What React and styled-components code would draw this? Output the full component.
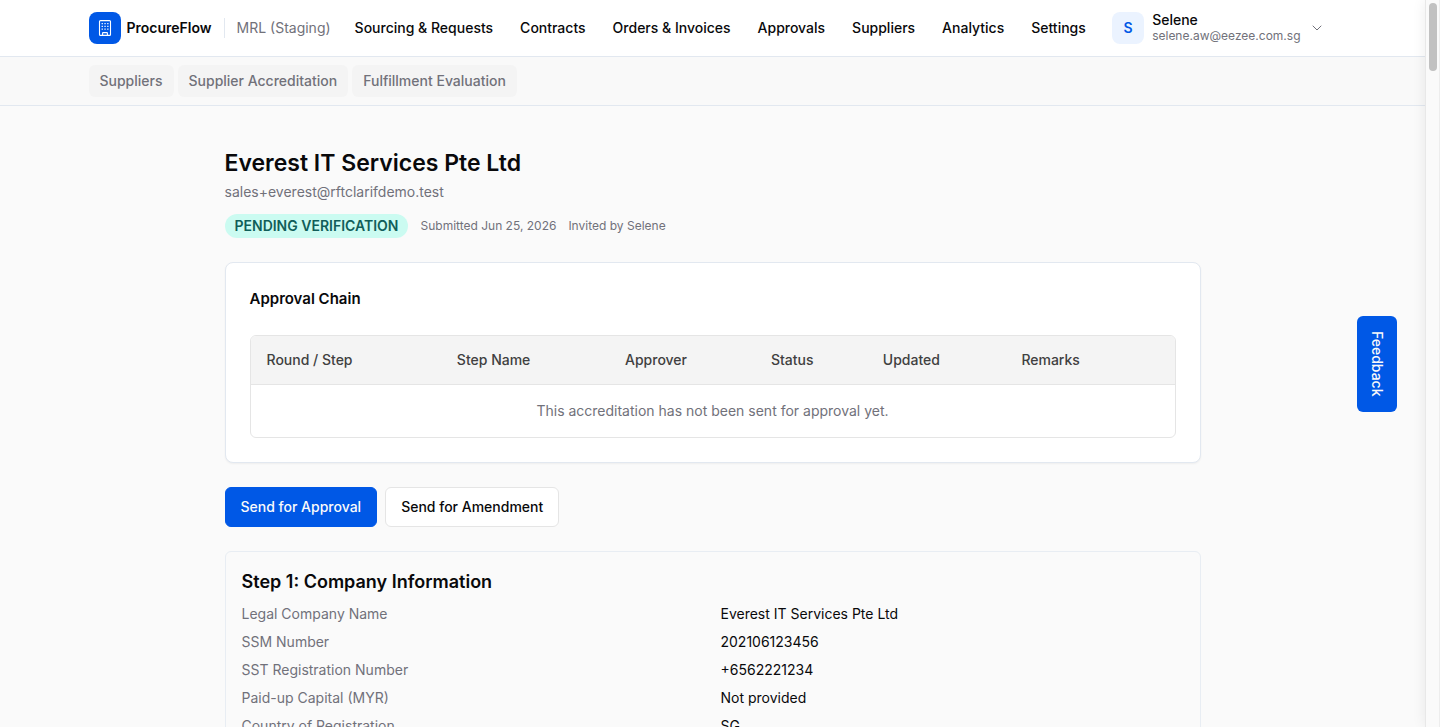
import React from 'react';
import styled, { createGlobalStyle } from 'styled-components';
import { ChevronDown } from 'lucide-react';

const GlobalStyle = createGlobalStyle`
*{
    box-sizing: border-box;
}

body{
    margin: 0;
    background: #fafafa;
    color: #09090b;
    font-family: Inter, 'Liberation Sans', sans-serif;
    font-size: 14px;
    line-height: 20px;
    -webkit-font-smoothing: antialiased;
}

h1, h2, h3, dl, dd{
    margin: 0;
}

a{
    color: inherit;
    text-decoration: none;
}

button{
    font: inherit;
    color: inherit;
    cursor: pointer;
}
`;

const Shell = styled.div`
display: flex;
height: 100vh;
overflow: hidden;
`;

const Page = styled.div`
flex: 1;
min-width: 0;
overflow: hidden;
`;

const ScrollTrack = styled.div`
width: 15px;
padding: 3px 2px 3px 3px;
background: #fafafa;
border-left: 1px solid #e8e8e8;
border-right: 1px solid #ededed;
box-shadow: 0 0 14px rgba(0, 0, 0, 0.08);
`;

const ScrollThumb = styled.div`
width: 8px;
height: 68px;
border-radius: 4px;
background: #c1c1c1;
`;

const TopBar = styled.header`
background: #fff;
border-bottom: 1px solid #e2e8f0;
`;

const SubBar = styled.nav`
background: #f9f9f9;
border-bottom: 1px solid #e2e8f0;
`;

const BarInner = styled.div`
display: flex;
align-items: center;
gap: ${(props) => props.$gap};
max-width: 1248px;
height: ${(props) => props.$height};
margin: 0 auto;
`;

const Brand = styled.a`
display: flex;
align-items: center;
gap: 6px;
font-weight: 600;
`;

const Logo = styled.span`
display: flex;
align-items: center;
justify-content: center;
width: 32px;
height: 32px;
border-radius: 8px;
background: #0058e6;
color: #fff;
`;

const Workspace = styled.span`
display: flex;
align-items: center;
height: 20px;
padding-left: 12px;
border-left: 1px solid #e2e8f0;
color: #71717a;
white-space: nowrap;
`;

const MainNav = styled.nav`
display: flex;
gap: 27px;
margin-left: 12px;
font-weight: 500;
white-space: nowrap;
`;

const UserMenu = styled.button`
display: flex;
align-items: center;
gap: 8px;
margin-left: auto;
padding: 0 12px 0 0;
border: 0;
background: none;
text-align: left;
`;

const Avatar = styled.span`
display: flex;
align-items: center;
justify-content: center;
width: 32px;
height: 32px;
border-radius: 8px;
background: #ebf3ff;
color: #0058e6;
font-weight: 600;
`;

const UserText = styled.span`
display: flex;
flex-direction: column;
font-weight: 500;
line-height: 16px;

small{
    color: #71717a;
    font-size: 12px;
    font-weight: 400;
}

& + svg{
    color: #71717a;
}
`;

const SubLink = styled.a`
padding: 6px 11px;
border-radius: 6px;
background: #f4f4f4;
color: #71717a;
font-weight: 500;
`;

const Main = styled.main`
max-width: 1024px;
margin: 0 auto;
padding: 41px 24px;
`;

const Title = styled.h1`
font-size: 23px;
font-weight: 600;
line-height: 32px;
`;

const Muted = styled.div`
margin-top: 3px;
color: #71717a;
`;

const MetaRow = styled.div`
display: flex;
align-items: center;
gap: 12px;
margin-top: 12px;
color: #71717a;
font-size: 12px;
`;

const Badge = styled.span`
padding: 2px 10px;
border-radius: 12px;
background: #cbfbf1;
color: #115e59;
font-size: 14px;
font-weight: 600;
`;

const Card = styled.section`
margin-top: 24px;
padding: 24px;
border: 1px solid #e2e8f0;
border-radius: 8px;
background: #fff;
box-shadow: 0 1px 2px rgba(0, 0, 0, 0.05);
`;

const CardTitle = styled.h2`
font-size: 15px;
font-weight: 600;
line-height: 24px;
`;

const TableFrame = styled.div`
margin-top: 24px;
border: 1px solid #e5e5e5;
border-radius: 6px;
overflow: hidden;
`;

const ChainTable = styled.table`
width: 100%;
table-layout: fixed;
border-collapse: collapse;

th{
    height: 48px;
    padding: 0 16px;
    background: #f4f4f4;
    border-bottom: 1px solid #e5e5e5;
    color: #404040;
    font-weight: 500;
    text-align: left;
}

td{
    height: 53px;
    padding: 0 16px;
    color: #71717a;
    text-align: center;
}
`;

const Actions = styled.div`
display: flex;
gap: 8px;
margin-top: 24px;
`;

const Button = styled.button`
height: 40px;
padding: 0 15px;
border: 1px solid ${(props) => (props.$primary ? '#0058e6' : '#e5e5e5')};
border-radius: 6px;
background: ${(props) => (props.$primary ? '#0058e6' : '#fff')};
color: ${(props) => (props.$primary ? '#fafafa' : '#09090b')};
font-weight: 500;
`;

const Step = styled.section`
margin-top: 24px;
padding: 16px;
border: 1px solid #e8edf3;
border-radius: 6px;
`;

const StepTitle = styled.h3`
font-size: 18px;
font-weight: 600;
line-height: 28px;
`;

const Details = styled.dl`
display: grid;
grid-template-columns: 1fr 1fr;
gap: 8px 16px;
margin-top: 8px;

dt{
    color: #71717a;
}
`;

const FeedbackButton = styled.button`
position: fixed;
top: 50%;
right: 43px;
width: 40px;
height: 96px;
margin-top: -48px;
padding: 0;
border: 0;
border-radius: 6px;
background: #0058e6;
color: #fafafa;
font-weight: 500;
writing-mode: vertical-rl;
`;

const navItems = ['Sourcing & Requests', 'Contracts', 'Orders & Invoices', 'Approvals', 'Suppliers', 'Analytics', 'Settings'];

const subItems = ['Suppliers', 'Supplier Accreditation', 'Fulfillment Evaluation'];

const columns = [
  { label: 'Round / Step', width: '20.6%' },
  { label: 'Step Name', width: '18.2%' },
  { label: 'Approver', width: '15.8%' },
  { label: 'Status', width: '12.1%' },
  { label: 'Updated', width: '15%' },
  { label: 'Remarks', width: '18.3%' },
];

const companyInfo = [
  ['Legal Company Name', 'Everest IT Services Pte Ltd'],
  ['SSM Number', '202106123456'],
  ['SST Registration Number', '+6562221234'],
  ['Paid-up Capital (MYR)', 'Not provided'],
  ['Country of Registration', 'SG'],
];

function BuildingIcon(){
    return(
        <svg width="16" height="16" viewBox="0 0 16 16" fill="none" stroke="currentColor" aria-hidden="true">
          <rect x="2.5" y="0.6" width="11" height="14.8" rx="1" strokeWidth="1.1"/>
          <path d="M5.6 15.2v-2.1a.5.5 0 0 1 .5-.5h3.8a.5.5 0 0 1 .5.5v2.1" strokeWidth="1.1"/>
          <path d="M4.6 3.6h1.3M7.4 3.6h1.3M10.2 3.6h1.3M4.6 6.4h1.3M7.4 6.4h1.3M10.2 6.4h1.3M4.6 9.2h1.3M7.4 9.2h1.3M10.2 9.2h1.3" strokeWidth="1.2"/>
        </svg>
    )
}

export default function App(){
    return(
        <>
        <GlobalStyle/>
        <Shell>
          <Page>
            <TopBar>
              <BarInner $height="56px" $gap="12px">
                <Brand href="#">
                  <Logo><BuildingIcon/></Logo>
                  ProcureFlow
                </Brand>
                <Workspace>MRL (Staging)</Workspace>
                <MainNav>
                  {navItems.map((item) => <a href="#" key={item}>{item}</a>)}
                </MainNav>
                <UserMenu>
                  <Avatar>S</Avatar>
                  <UserText>
                    Selene
                    <small>selene.aw@eezee.com.sg</small>
                  </UserText>
                  <ChevronDown size={16} strokeWidth={1.5}/>
                </UserMenu>
              </BarInner>
            </TopBar>
            <SubBar>
              <BarInner $height="48px" $gap="4px">
                {subItems.map((item) => <SubLink href="#" key={item}>{item}</SubLink>)}
              </BarInner>
            </SubBar>
            <Main>
              <Title>Everest IT Services Pte Ltd</Title>
              <Muted>sales+everest@rftclarifdemo.test</Muted>
              <MetaRow>
                <Badge>PENDING VERIFICATION</Badge>
                <span>Submitted Jun 25, 2026</span>
                <span>Invited by Selene</span>
              </MetaRow>
              <Card>
                <CardTitle>Approval Chain</CardTitle>
                <TableFrame>
                  <ChainTable>
                    <colgroup>
                      {columns.map((col) => <col key={col.label} width={col.width}/>)}
                    </colgroup>
                    <thead>
                      <tr>
                        {columns.map((col) => <th key={col.label}>{col.label}</th>)}
                      </tr>
                    </thead>
                    <tbody>
                      <tr>
                        <td colSpan={6}>This accreditation has not been sent for approval yet.</td>
                      </tr>
                    </tbody>
                  </ChainTable>
                </TableFrame>
              </Card>
              <Actions>
                <Button $primary>Send for Approval</Button>
                <Button>Send for Amendment</Button>
              </Actions>
              <Step>
                <StepTitle>Step 1: Company Information</StepTitle>
                <Details>
                  {companyInfo.map(([label, value]) => (
                    <React.Fragment key={label}>
                      <dt>{label}</dt>
                      <dd>{value}</dd>
                    </React.Fragment>
                  ))}
                </Details>
              </Step>
            </Main>
          </Page>
          <ScrollTrack>
            <ScrollThumb/>
          </ScrollTrack>
        </Shell>
        <FeedbackButton>Feedback</FeedbackButton>
        </>
    )
}
